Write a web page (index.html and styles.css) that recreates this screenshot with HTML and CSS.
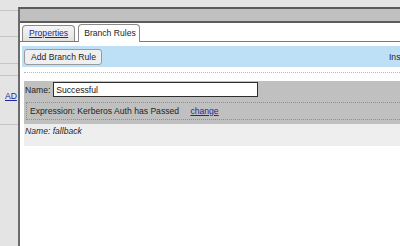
FILE: index.html
```html
<!DOCTYPE html>
<html lang="en">
<head>
    <meta charset="UTF-8">
    <meta name="viewport" content="width=device-width, initial-scale=1.0">
    <title>Branch Rules</title>
    <link rel="stylesheet" href="styles.css">
</head>
<body>
    <div class="sidebar">
        <div class="side-row row-a"></div>
        <div class="side-row row-b"></div>
        <div class="side-row row-c"></div>
        <div class="side-row row-d"></div>
        <div class="side-row row-e"><a href="#">AD</a></div>
        <div class="side-row row-f"></div>
    </div>

    <div class="main">
        <div class="main-head"></div>

        <div class="tabs">
            <div class="tab"><a href="#">Properties</a></div>
            <div class="tab active">Branch Rules</div>
        </div>

        <div class="toolbar">
            <button type="button">Add Branch Rule</button>
            <span class="toolbar-note">Insert Rule</span>
        </div>

        <div class="rules">
            <div class="rule">
                <div class="rule-name">
                    <label for="ruleName">Name:</label>
                    <input type="text" id="ruleName" value="Successful">
                </div>
                <div class="expression">
                    Expression: Kerberos Auth has Passed
                    <a href="#" class="change">change</a>
                </div>
            </div>
            <div class="fallback">Name: fallback</div>
        </div>
    </div>
</body>
</html>
```

FILE: styles.css
```css
body {
    margin: 0;
    width: 400px;
    height: 246px;
    overflow: hidden;
    display: flex;
    background: #e4e4e4;
    font-family: "Liberation Sans", Arial, sans-serif;
    font-size: 8.6px;
    color: #1e1e1e;
}

a {
    color: #2525a0;
}

/* left column */
.sidebar {
    width: 18px;
    flex-shrink: 0;
    overflow: hidden;
}

.side-row {
    border-bottom: 1px solid #c6c6c6;
}

.row-a { height: 10px; }
.row-b { height: 25px; }
.row-c { height: 26px; }
.row-d { height: 11px; }
.row-e {
    height: 49px;
    padding-left: 5px;
    box-sizing: border-box;
    padding-top: 15px;
    white-space: nowrap;
}
.row-f { border-bottom: none; }

/* main panel */
.main {
    flex-shrink: 0;
    width: 480px;
    margin-top: 7px;
    border-left: 2px solid #6b6b6b;
    border-top: 2px solid #5a5a5a;
    background: #fff;
}

.main-head {
    height: 12px;
    background: #c0c0c0;
    border-bottom: 2px solid #5c5c5c;
}

.tabs {
    height: 18px;
    display: flex;
    align-items: flex-end;
    gap: 3px;
    padding-left: 2px;
    border-bottom: 1px solid #7a7a7a;
}

.tab {
    height: 15px;
    line-height: 15px;
    padding: 0 6px;
    border: 1px solid #8a8a8a;
    border-bottom: none;
    border-radius: 4px 4px 0 0;
    background: linear-gradient(#f6f6f6, #e2e2e2);
}

.tab.active {
    height: 17px;
    line-height: 17px;
    padding: 0 3px 0 5px;
    margin-bottom: -1px;
    background: #fff;
}

.toolbar {
    display: flex;
    align-items: flex-start;
    height: 21px;
    box-sizing: border-box;
    margin: 4px 0 0 2px;
    padding: 3px 2px 0;
    background: #bde0f6;
    white-space: nowrap;
}

button {
    height: 16px;
    padding: 0 5px 0 6px;
    font: inherit;
    color: #1e1e1e;
    background: #efefef;
    border: 1px solid #9a9a9a;
    border-radius: 3px;
}

.toolbar-note {
    margin-left: 287px;
    line-height: 16px;
}

/* rules */
.rules {
    margin: 5px 0 0 4px;
    padding-top: 8px;
    border-top: 1px dotted #b8b8b8;
}

.rule {
    background: #c0c0c0;
    padding: 1px 0 4px 1px;
}

.rule-name {
    display: flex;
    align-items: center;
    gap: 3px;
}

.rule-name input {
    width: 205px;
    height: 15px;
    box-sizing: border-box;
    margin: 0;
    padding: 0 2px;
    font: inherit;
    color: #111;
    border: 1px solid #2e2e2e;
    background: #fff;
}

.expression {
    margin: 5px 0 0 1px;
    padding: 0 3px;
    line-height: 16px;
    border: 1px dotted #8e8e8e;
    border-right: none;
    white-space: nowrap;
}

.change {
    margin-left: 9px;
}

.fallback {
    height: 22px;
    box-sizing: border-box;
    padding: 2px 0 0 1px;
    background: #eeeeee;
    font-style: italic;
}
```
